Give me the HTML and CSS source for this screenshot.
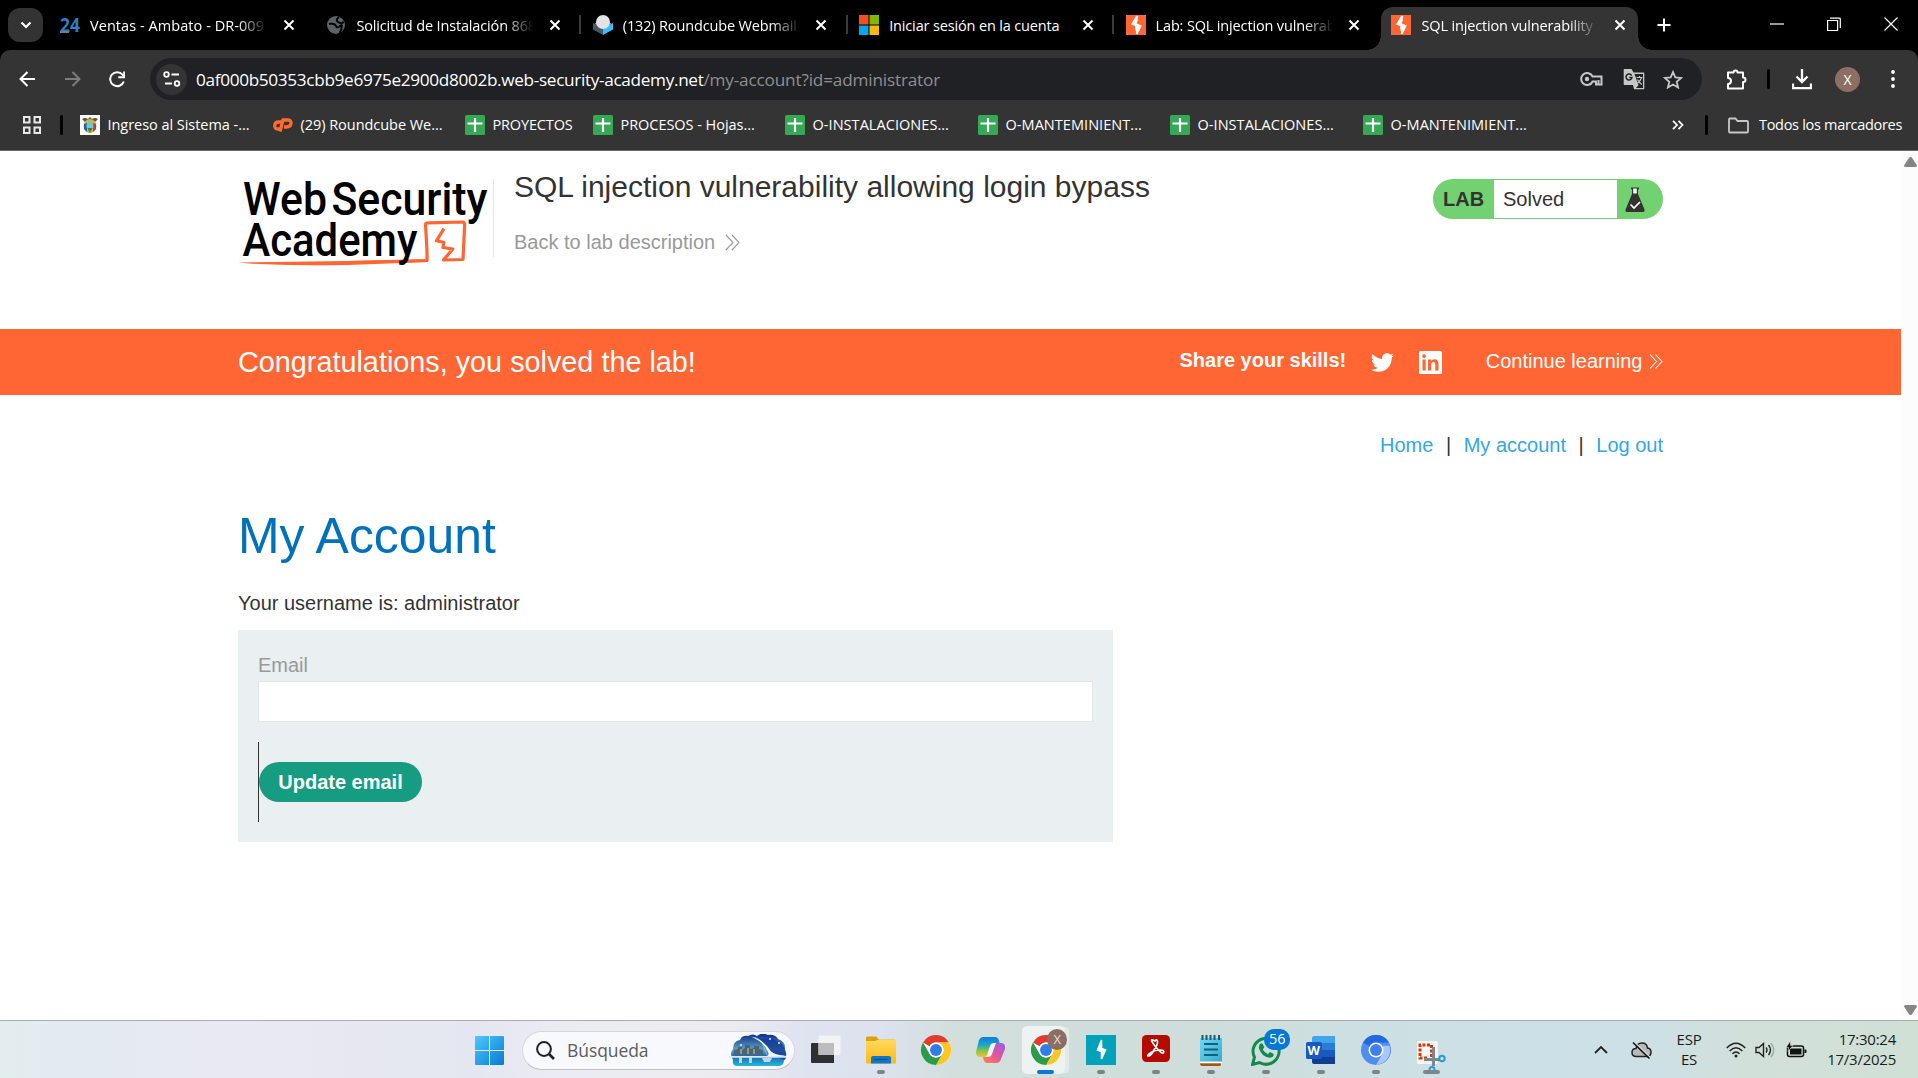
FILE: index.html
```html
<!DOCTYPE html>
<html lang="es">
<head>
<meta charset="utf-8">
<title>SQL injection vulnerability allowing login bypass</title>
<link rel="stylesheet" href="styles.css">
</head>
<body>
<svg class="defs" width="0" height="0" aria-hidden="true">
  <defs>
    <linearGradient id="win" x1="0" y1="0" x2="1" y2="1"><stop offset="0" stop-color="#4cc9fb"/><stop offset="1" stop-color="#0a78d4"/></linearGradient>
    <linearGradient id="fold" x1="0" y1="0" x2="0" y2="1"><stop offset="0" stop-color="#ffda61"/><stop offset="1" stop-color="#fcb914"/></linearGradient>
    <linearGradient id="sky" x1="0" y1="0" x2="0" y2="1"><stop offset="0" stop-color="#0b2a8a"/><stop offset=".5" stop-color="#5fa5c4"/><stop offset=".7" stop-color="#1668b8"/><stop offset="1" stop-color="#25b9d6"/></linearGradient>
    <linearGradient id="copA" x1="0" y1="0" x2="0" y2="1"><stop offset="0" stop-color="#0d7be0"/><stop offset=".4" stop-color="#1aa8c9"/><stop offset=".7" stop-color="#8fc63f"/><stop offset="1" stop-color="#f5c22b"/></linearGradient>
    <linearGradient id="copB" x1="1" y1="0" x2="0" y2="1"><stop offset="0" stop-color="#9a5cf0"/><stop offset=".5" stop-color="#e254a0"/><stop offset="1" stop-color="#fb8a3c"/></linearGradient>
    <linearGradient id="note" x1="0" y1="0" x2="1" y2="1"><stop offset="0" stop-color="#6fdcf2"/><stop offset="1" stop-color="#36a8cc"/></linearGradient>
    <symbol id="x" viewBox="0 0 12 12"><path d="M1.500 1.500l9 9M10.500 1.500l-9 9" stroke="#fff" stroke-width="2" fill="none"/></symbol>
    <symbol id="burp" viewBox="0 0 20 20"><rect width="20" height="20" fill="#f63"/><path d="M11.500 1L8 8.500l6.500 2.500L10.500 19" fill="none" stroke="#fff" stroke-width="2"/><path d="M10 1L5 9.500l4.500 1.500L12 5zM9.500 10l-.5 3 1.500 5.500 4.500-8z" fill="#fff"/></symbol>
    <symbol id="sheet" viewBox="0 0 20 20"><rect width="20" height="20" rx="1.500" fill="#34a853"/><path d="M10 3v14M2.500 8.500h15" stroke="#fff" stroke-width="2.200"/></symbol>
    <symbol id="chrome" viewBox="0 0 48 48"><circle cx="24" cy="24" r="24" fill="#fff"/><path d="M3.200 12A24 24 0 0 1 44.800 12H24a12 12 0 0 0-10.400 6z" fill="#e33b2e"/><path d="M44.800 12A24 24 0 0 1 24 48l10.400-18A12 12 0 0 0 34.400 18L24 12z" fill="#fcc624"/><path d="M24 48A24 24 0 0 1 3.200 12l10.400 18A12 12 0 0 0 34.400 30z" fill="#2a9b48"/><circle cx="24" cy="24" r="12" fill="#fff"/><circle cx="24" cy="24" r="9.500" fill="#2f7de9"/></symbol>
    <symbol id="chev2" viewBox="0 0 15 17"><path d="M1 1l7 7.500L1 16M7 1l7 7.500L7 16" fill="none" stroke="currentColor" stroke-width="1.100"/></symbol>
  </defs>
</svg>

<header class="browser">
  <div class="tabs">
    <div class="tabsearch"><svg width="12" height="8" viewBox="0 0 12 8"><path d="M1.500 1.500L6 6l4.500-4.500" fill="none" stroke="#fff" stroke-width="2.200"/></svg></div>
    <div class="tab">
      <svg class="fav" viewBox="0 0 20 20"><text x="0" y="16.500" class="b24" textLength="20" lengthAdjust="spacingAndGlyphs">24</text><path d="M0 17h9" stroke="#6a7f93" stroke-width="2"/></svg>
      <span class="tt t1">Ventas - Ambato - DR-009</span><svg class="cl"><use href="#x"/></svg>
    </div>
    <div class="tab">
      <svg class="fav" viewBox="0 0 20 20"><circle cx="10" cy="10" r="9" fill="#5f6368"/><path d="M3 9q6-1 7 2t4 0 1 4-4 4" fill="none" stroke="#000" stroke-width="2"/><path d="M13 2q-4 3-1 5t6 0" fill="none" stroke="#000" stroke-width="2"/></svg>
      <span class="tt">Solicitud de Instalación 868</span><svg class="cl"><use href="#x"/></svg><i class="sep"></i>
    </div>
    <div class="tab">
      <svg class="fav" viewBox="0 0 20 20"><path d="M0 8l10 5v7L0 14.500z" fill="#455a64"/><path d="M20 8l-10 5v7l10-5.500z" fill="#37beff"/><path d="M1.500 8.500L10 4l8.500 4.500L10 13.500z" fill="#89a"/><circle cx="10" cy="7" r="7" fill="#e4e4e4"/></svg>
      <span class="tt">(132) Roundcube Webmail</span><svg class="cl"><use href="#x"/></svg><i class="sep"></i>
    </div>
    <div class="tab">
      <svg class="fav" viewBox="0 0 20 20"><path fill="#f25022" d="M0 0h9.500v9.500H0z"/><path fill="#7fba00" d="M10.500 0H20v9.500h-9.500z"/><path fill="#00a4ef" d="M0 10.500h9.500V20H0z"/><path fill="#ffb900" d="M10.500 10.500H20V20h-9.500z"/></svg>
      <span class="tt t4">Iniciar sesión en la cuenta</span><svg class="cl"><use href="#x"/></svg><i class="sep"></i>
    </div>
    <div class="tab">
      <svg class="fav"><use href="#burp"/></svg>
      <span class="tt">Lab: SQL injection vulnerability</span><svg class="cl"><use href="#x"/></svg>
    </div>
    <div class="tab active">
      <svg class="fav"><use href="#burp"/></svg>
      <span class="tt">SQL injection vulnerability allowing</span><svg class="cl"><use href="#x"/></svg>
    </div>
    <svg class="plus" width="14" height="14" viewBox="0 0 14 14"><path d="M7 .5v13M.5 7h13" stroke="#fff" stroke-width="2"/></svg>
    <div class="winbtns">
      <svg width="14" height="14"><path d="M0 7h14" stroke="#fff" stroke-width="1.200"/></svg>
      <svg width="14" height="14"><path d="M.6 3.500h10v10h-10zM3 1.200h9.500q.8 0 .8.800V11" fill="none" stroke="#fff" stroke-width="1.200"/></svg>
      <svg width="14" height="14"><path d="M.5.500l13 13M13.500.500l-13 13" stroke="#fff" stroke-width="1.200"/></svg>
    </div>
  </div>
  <div class="toolbar">
    <svg class="back" width="17" height="16" viewBox="0 0 17 16"><path d="M16 8H2M8.500 1L1.500 8l7 7" fill="none" stroke="#fff" stroke-width="2"/></svg>
    <svg class="fwd" width="17" height="16" viewBox="0 0 17 16"><path d="M1 8h14M8.500 1l7 7-7 7" fill="none" stroke="#7c7c7c" stroke-width="2"/></svg>
    <svg class="reload" width="17" height="17" viewBox="0 0 17 17"><path d="M14.800 10.500A7 7 0 1 1 13.600 3.700L15.200 5.600" fill="none" stroke="#fff" stroke-width="2"/><path d="M16 .5v6.700H9.300V5.300h4.900V.5z" fill="#fff"/></svg>
    <div class="omni">
      <div class="site"><svg width="18" height="16" viewBox="0 0 18 16" fill="none" stroke="#fff" stroke-width="1.800"><circle cx="3.500" cy="3.500" r="2.300"/><path d="M8.500 3.500H16M2 12.500h7"/><circle cx="14" cy="12.500" r="2.300"/></svg></div>
      <span class="url">0af000b50353cbb9e6975e2900d8002b.web-security-academy.net</span><span class="path">/my-account?id=administrator</span>
      <div class="omni-icons">
        <svg width="24" height="14" viewBox="0 0 24 14" fill="none" stroke="#c7c7c7" stroke-width="2"><path d="M12.600 4.500A6 6 0 1 0 12.600 9.500H16V12.500h5.500V4.500z"/><circle cx="7" cy="7" r="2.200" fill="#c7c7c7" stroke="none"/><path d="M18.500 8v4"/></svg>
        <svg width="22" height="22" viewBox="0 0 22 22"><path d="M1.500 1h7l2 3.500H20.500q.8 0 .8.800V20.500q0 .7-.8.700H11L10 17H1.500q-.8 0-.8-.8V1.800q0-.8.8-.8z" fill="#c7c7c7"/><path d="M11.500 6H20v14h-7l2.500-2.800z" fill="#202124"/><path d="M13.500 9.500h6M16.500 8v1.500M18.500 9.500q-1 4-4 5.500M14.500 11.500q1.500 3 4.500 5" stroke="#c7c7c7" stroke-width="1.100" fill="none"/><path d="M8.600 7.500A3 3 0 1 0 9 9.500H6.200" fill="none" stroke="#202124" stroke-width="1.500"/></svg>
        <svg width="20" height="19" viewBox="0 0 20 19"><path d="M10 2l2.300 5.400 5.900.5-4.500 3.900 1.400 5.700-5.100-3-5.100 3 1.400-5.700L1.800 7.900l5.900-.5z" fill="none" stroke="#c7c7c7" stroke-width="1.800"/></svg>
      </div>
    </div>
    <div class="actions">
      <svg class="a1" width="22" height="21" viewBox="0 0 22 21"><path d="M2 3.500h5.500q0-2 2-2t2 2H17V8.500q2.500 0 2.500 2.300T17 13v6.500H2V15q3 0 3-3t-3-3z" fill="none" stroke="#fff" stroke-width="2" stroke-linejoin="round"/></svg>
      <i class="vbar"></i>
      <svg class="a2" width="20" height="21" viewBox="0 0 20 21"><path d="M10 0v12M4.500 7.500L10 13l5.500-5.500M1 14.500v4.700h18v-4.700" fill="none" stroke="#fff" stroke-width="2.300"/></svg>
      <span class="avatar">X</span>
      <svg class="a3" width="4" height="18" fill="#fff"><circle cx="2" cy="2" r="1.900"/><circle cx="2" cy="9" r="1.900"/><circle cx="2" cy="16" r="1.900"/></svg>
    </div>
  </div>
  <div class="marks">
    <svg class="apps" width="18" height="18" fill="none" stroke="#e8e8e8" stroke-width="2"><path d="M1 1h5.500v5.500H1zM11.500 1H17v5.500h-5.500zM1 11.500h5.500V17H1zM11.500 11.500H17V17h-5.500z"/></svg>
    <i class="vbar"></i>
    <div class="marklist">
      <a><svg class="fav" viewBox="0 0 20 20"><rect width="20" height="20" fill="#fff"/><path d="M2 4q3-2 6 0l2-2 2 2q3-2 6 0l-3 3H5z" fill="#555"/><ellipse cx="10" cy="11" rx="6.500" ry="7" fill="#d6b23c"/><path d="M4 9v5l3 3V8z" fill="#2a5fa8"/><path d="M16 9v5l-3 3V8z" fill="#c33"/><ellipse cx="10" cy="11" rx="3.500" ry="4.500" fill="#6fc7cf"/><path d="M7.500 13h5l-2.500 5z" fill="#4a7a3a"/></svg><span>Ingreso al Sistema -...</span></a>
      <a><svg class="fav" viewBox="0 0 20 20" fill="none" stroke="#ff6c2c" stroke-width="3.300"><path d="M8.500 7H5.500Q2 7 1.700 10.500T5 14h1.500M7 16.500L10 5h4.500q4 0 3.500 3.500T13.500 12h-2.500"/></svg><span>(29) Roundcube We...</span></a>
      <a><svg class="fav"><use href="#sheet"/></svg><span class="m3">PROYECTOS</span></a>
      <a><svg class="fav"><use href="#sheet"/></svg><span>PROCESOS - Hojas...</span></a>
      <a><svg class="fav"><use href="#sheet"/></svg><span class="m5">O-INSTALACIONES...</span></a>
      <a><svg class="fav"><use href="#sheet"/></svg><span class="m5">O-MANTEMINIENT...</span></a>
      <a><svg class="fav"><use href="#sheet"/></svg><span class="m5">O-INSTALACIONES...</span></a>
      <a><svg class="fav"><use href="#sheet"/></svg><span class="m5">O-MANTENIMIENT...</span></a>
    </div>
    <div class="allmarks">
      <svg width="12" height="10" viewBox="0 0 12 10"><path d="M1 .8L5 5 1 9.200M6.500.8l4 4.200-4 4.200" fill="none" stroke="#fff" stroke-width="1.800"/></svg>
      <i class="vbar"></i>
      <svg class="folder" width="21" height="17" viewBox="0 0 21 17"><path d="M1 14.500V2.500Q1 1.500 2 1.500h5.500l2 2.500H19q1 0 1 1v9.500q0 1-1 1H2q-1 0-1-1z" fill="none" stroke="#c7c7c7" stroke-width="1.800"/></svg>
      <span class="m7">Todos los marcadores</span>
    </div>
  </div>
</header>

<main class="view">
  <div class="page">
    <div class="wrap labhead">
      <svg class="logo" width="255" height="100" viewBox="0 0 255 100">
        <path d="M110 83.500L189 81.500V72L187.500 45.500q0-1.700 3-1.700L225.500 43l1.200 2L225 80.500l-19.500.5 9.300-11-9.800-1.500.8-5.300-7.300-1.500L206 49.700" fill="none" stroke="#f63" stroke-width="3.200" stroke-linejoin="round"/>
        <path d="M0 83.500q30 3.500 110 2.500l80-3v-2.500L110 82z" fill="#f63"/>
        <g class="logotype"><text x="5" y="35.700" textLength="84" lengthAdjust="spacingAndGlyphs">Web</text><text x="93.500" y="35.700" textLength="156" lengthAdjust="spacingAndGlyphs">Security</text><text x="4.500" y="77" textLength="175" lengthAdjust="spacingAndGlyphs">Academy</text></g>
      </svg>
      <div class="titles">
        <h2>SQL injection vulnerability allowing login bypass</h2>
        <a class="backlink"><span>Back to lab description</span><svg width="15" height="17"><use href="#chev2"/></svg></a>
      </div>
      <div class="labstatus"><b>LAB</b><span>Solved</span>
        <svg width="20" height="25" viewBox="0 0 20 25"><path d="M6 .5h8v1.800h-1V7L19.500 22.500Q20 25 18 25H2Q0 25 .5 22.500L7 7V2.300H6z" fill="#333332"/><path d="M8.200 1.500h3.600v5H8.200z" fill="#fff"/><path d="M5.500 17.500l3.500 3.500 6-6" fill="none" stroke="#fff" stroke-width="1.700"/></svg>
      </div>
    </div>
    <div class="banner"><div class="wrap">
      <h4>Congratulations, you solved the lab!</h4>
      <div class="share">
        <b>Share your skills!</b>
        <svg width="23" height="21" viewBox="0 2 24 20"><path fill="#fff" d="M23.950 4.570a10 10 0 0 1-2.820.77 4.960 4.960 0 0 0 2.160-2.720 9.900 9.900 0 0 1-3.120 1.180 4.920 4.920 0 0 0-8.380 4.480A13.900 13.900 0 0 1 1.640 3.160a4.920 4.920 0 0 0 1.520 6.570 4.900 4.900 0 0 1-2.230-.61v.06a4.920 4.920 0 0 0 3.950 4.830 5 5 0 0 1-2.210.08 4.940 4.940 0 0 0 4.600 3.420A9.870 9.870 0 0 1 0 19.540a14 14 0 0 0 7.550 2.210c9.050 0 14-7.500 14-13.980 0-.21 0-.42-.02-.63a9.900 9.900 0 0 0 2.420-2.570z"/></svg>
        <svg width="23" height="23" viewBox="0 0 23 23"><rect width="23" height="23" rx="1.500" fill="#fff"/><g fill="#f63"><rect x="3.500" y="8.500" width="3.200" height="11"/><circle cx="5.100" cy="5.100" r="1.900"/><path d="M9 8.500h3.100v1.600q1-1.900 3.400-1.900 4 0 4 4.800v6.500h-3.200v-5.800q0-2.800-1.900-2.800-2.200 0-2.200 2.900v5.700H9z"/></g></svg>
        <a><span>Continue learning</span><svg width="14" height="17"><use href="#chev2"/></svg></a>
      </div>
    </div></div>
    <div class="wrap account">
      <nav><a>Home</a><i>|</i><a>My account</a><i>|</i><a>Log out</a></nav>
      <h1>My Account</h1>
      <p>Your username is: administrator</p>
      <form>
        <label for="email">Email</label>
        <input id="email" type="email">
        <div class="btnrow"><button type="button">Update email</button></div>
      </form>
    </div>
  </div>
  <div class="scroll">
    <svg width="13" height="10"><path d="M6.500 0Q7.500 0 8.200 1L13 8.500Q13 10 11.500 10h-10Q0 10 0 8.500L4.800 1Q5.500 0 6.500 0z" fill="#858585"/></svg>
    <svg width="13" height="10"><path d="M6.500 10Q7.500 10 8.200 9L13 1.500Q13 0 11.500 0h-10Q0 0 0 1.500L4.800 9Q5.500 10 6.500 10z" fill="#858585"/></svg>
  </div>
</main>

<footer class="taskbar">
  <svg class="start" width="29" height="29" viewBox="0 0 29 29"><path d="M1 0h13v14H0V1q0-1 1-1zM15 0h13q1 0 1 1v13H15zM0 15h14v14H1q-1 0-1-1zM15 15h14v13q0 1-1 1H15z" fill="url(#win)"/></svg>
  <div class="search">
    <svg width="19" height="19" viewBox="0 0 19 19"><circle cx="8" cy="8" r="6.900" fill="none" stroke="#222" stroke-width="2"/><path d="M13 13l5 5" stroke="#222" stroke-width="2.600"/></svg>
    <span>Búsqueda</span>
    <svg width="58" height="33" viewBox="0 0 58 33"><path d="M4 26q-4-7 0-11 0-8 7-9 2-5 8-4 5-3 9 0 5-4 11-1 7-1 10 4 8 3 7 10 3 7-1 11 0 6-6 6H8q-5 0-4-6z" fill="url(#sky)"/><path d="M30 6q10-4 18 1 8 3 8 10 2 5 0 9l-9-3z" fill="#123a96" opacity=".8"/><path d="M5 21v-5l4-1v-2h4v3l3-2v-3h5v4l4-1v-2h5v3l4 1v5z" fill="#4b6473"/><path d="M12 20v-5M19 20v-6M25 20v-5" stroke="#d9cf98" stroke-width="1"/><path d="M26 3.500q10 4 15 16M33 8l5 13" fill="none" stroke="#9fc0ec" stroke-width=".8"/><path d="M22 2.500q13 3 20 15 5 4 15 4l-9 1.500H35q6-1 4-5-4-10-17-15.500z" fill="#f4f7ff"/><path d="M0 22h57v1.800H0z" fill="#dce7f7"/><path d="M10 23h3v6h-3zM20 23h3v6h-3zM33 24h10l-2 4h-6z" fill="#c7d3e6"/><circle cx="12" cy="11" r=".9" fill="#fff"/><circle cx="41" cy="5" r=".9" fill="#fff"/><circle cx="50" cy="9" r=".9" fill="#fff"/></svg>
  </div>
  <div class="apps-row">
    <div class="cell"><svg width="30" height="30" viewBox="0 0 30 30"><path d="M0 9q0-1 1-1h22v20H1q-1 0-1-1z" fill="#303030"/><rect x="7.500" y=".5" width="22" height="19.500" rx="1" fill="#f4f4f4" opacity=".97"/><path d="M7.500 8H23v12H7.500z" fill="#bdbdbd"/></svg></div>
    <div class="cell run"><svg width="30" height="28" viewBox="0 0 30 28"><path d="M0 2Q0 .5 1.500.5H10l3 3h16v8H0z" fill="#dea00c"/><path d="M0 5h9l4-1.500h16q1 0 1 1V27q0 .5-1 .5H1q-1 0-1-1z" fill="url(#fold)"/><path d="M5 27.500V22q0-2 2-2h16q2 0 2 2v5.500z" fill="#1175c8"/><path d="M8.500 23.500h13" stroke="#084f92" stroke-width="1.200"/></svg></div>
    <div class="cell"><svg width="30" height="30"><use href="#chrome"/></svg></div>
    <div class="cell"><svg width="29" height="28" viewBox="0 0 29 28"><path d="M7 1h12q3 0 4 4l1 3h-6q-3 0-4 4l-2 7q-1 2-4 2H3Q0 20 0 16L3 4Q4.500 1 7 1z" fill="url(#copA)"/><path d="M20 27H11q-3 0-4-6h4q2 0 3-3l3-7q1-4 5-4h4q4 1 3 6l-4 10q-1 4-5 4z" fill="url(#copB)"/><path d="M11 19l3-9q1-3 4-3h2l-4 11q-1 3-4 3h-2z" fill="#f7f2f7"/></svg></div>
    <div class="cell current"><svg width="30" height="30"><use href="#chrome"/></svg><b class="who">X</b></div>
    <div class="cell run"><svg width="30" height="30" viewBox="0 0 30 30"><path d="M0 0h30v30H0z" fill="#02a3ba"/><path d="M15.500 5v8.500l4 1.500-4 9v-7.500l-4-1.500z" fill="#fff" stroke="#fff" stroke-width="1.600"/></svg></div>
    <div class="cell run"><svg class="up" width="28" height="27" viewBox="0 0 28 27"><rect width="28" height="27" rx="4.500" fill="#b30b00"/><path d="M13 6q2-2.500 2.500.5T12 15q-3 6-5.500 6T9 17.500q4-2.500 9-2.500t3.500 2.500T13 11 13 6z" fill="none" stroke="#fff" stroke-width="1.700"/></svg></div>
    <div class="cell run"><svg width="24" height="31" viewBox="0 0 24 31"><path d="M1 28h21v1.500q0 1.500-2 1.500H3q-2 0-2-3z" fill="#a8540c"/><path d="M1 3h22v24H1z" fill="url(#note)"/><path d="M1 26.500h22v1.800H1z" fill="#fff"/><path d="M3.500 0v5M7.500 0v5M11.500 0v5M15.500 0v5M20 0v5" stroke="#1c5773" stroke-width="2"/><path d="M5 9h14M5 14.500h14M5 20h14" stroke="#125f80" stroke-width="1.800"/></svg></div>
    <div class="cell run"><svg width="30" height="31" viewBox="0 0 30 31"><path d="M1.500 29.500l2-7.300A13 13 0 1 1 8.500 27.500z" fill="none" stroke="#14894e" stroke-width="3"/><path d="M9.500 8.500h2l1.800 4-1.500 2q2 3.500 5.200 4.700l1.800-2.200 4 2q0 3.500-4 3.700Q11 22.500 8 13.500q-.5-3.500 1.500-5z" fill="#14894e"/></svg><b class="count">56</b></div>
    <div class="cell run"><svg width="29" height="28" viewBox="0 0 29 28"><path d="M6 2Q6 0 8 0h21v7H6z" fill="#41a5ee"/><path d="M6 7h23v7H6z" fill="#2b7cd3"/><path d="M6 14h23v7H6z" fill="#185abd"/><path d="M6 21h23v7H8q-2 0-2-2z" fill="#103f91"/><rect y="6" width="16" height="17" rx="1.500" fill="#185abd"/><text x="1.500" y="19" class="wl" textLength="12.500" lengthAdjust="spacingAndGlyphs">W</text></svg></div>
    <div class="cell run"><svg width="30" height="30" viewBox="0 0 48 48"><circle cx="24" cy="24" r="24" fill="#4f8df5"/><path d="M3.200 12A24 24 0 0 1 44.800 12H24a12 12 0 0 0-10.400 6z" fill="#1f6ae0"/><path d="M45.500 17A24 24 0 0 1 24 48l10.400-18V17z" fill="#a9c7fb"/><circle cx="24" cy="24" r="12" fill="#fff"/><circle cx="24" cy="24" r="9.500" fill="#3f80ee"/></svg></div>
    <div class="cell run wide"><svg class="snip" width="30" height="32" viewBox="0 0 30 32"><rect x="1" width="21" height="23" rx="1.500" fill="#f5f5f5"/><path d="M15.500 16V4H4v13h8" fill="none" stroke="#d83b01" stroke-width="3" stroke-dasharray="3 1.500"/><path d="M17.500 6v19M8 18.500h15" stroke="#7b8791" stroke-width="3"/><circle cx="26" cy="17.500" r="2.700" fill="none" stroke="#2a9bd6" stroke-width="2"/><circle cx="16" cy="28.500" r="2.500" fill="none" stroke="#2a9bd6" stroke-width="2"/></svg></div>
  </div>
  <div class="tray">
    <svg class="y1" width="14" height="9" viewBox="0 0 14 9"><path d="M1 8l6-6 6 6" fill="none" stroke="#222" stroke-width="1.800"/></svg>
    <svg class="y2" width="21" height="18" viewBox="0 0 21 18"><path d="M5.500 15.500q-4.500 0-4.500-4t4-4q1-5.500 6-5.500t5.500 5q3.500.5 3.500 4.200t-3.800 4.300z" fill="#b9b9b9" stroke="#222" stroke-width="1.500"/><path d="M3.500 1.300l15.500 15" stroke="#d4e2df" stroke-width="1.500"/><path d="M2 1.500l16.500 16" stroke="#111" stroke-width="1.600"/></svg>
    <div class="lang">ESP<br>ES</div>
    <svg class="y3" width="20" height="16" viewBox="0 0 20 16" fill="none" stroke="#222" stroke-width="1.500"><path d="M.8 6Q10-3.500 19.200 6M3.600 9Q10 2.300 16.400 9M6.400 11.800q3.600-3.600 7.200 0"/><circle cx="10" cy="14" r="1.500" fill="#222" stroke="none"/></svg>
    <svg class="y4" width="20" height="16" viewBox="0 0 20 16" fill="none" stroke="#222" stroke-width="1.400"><path d="M1 5.500h3L8.500 1.500v13L4 10.500H1zM11 5.500q2 2.500 0 5M13.500 3q4 5 0 10"/><path d="M16 1q5.500 7 0 14" stroke="#9daaa6"/></svg>
    <svg class="y5" width="21" height="17" viewBox="0 0 21 17"><rect x="1.500" y="5" width="16" height="10.500" rx="2" fill="none" stroke="#111" stroke-width="1.500"/><path d="M4 7.500h11.500v6H4zM18.500 8.500h1q1 0 1 1v1.500q0 1-1 1h-1z" fill="#111"/><path d="M4.500 0L0 6.500h2.500L2 10.500l5-6H4.500z" fill="#111" stroke="#d3e0d8" stroke-width=".6"/></svg>
    <div class="clock"><span>17:30:24</span><br><span>17/3/2025</span></div>
  </div>
</footer>
</body>
</html>
```
FILE: styles.css
```css
* { box-sizing: border-box; }
body { margin: 0; width: 1918px; height: 1078px; overflow: hidden; display: flex; flex-direction: column; background: #fff; font-family: "Liberation Sans", Arial, sans-serif; }
svg { display: block; flex: none; }
.defs { position: absolute; }
i { font-style: normal; flex: none; }

/* browser chrome */
.browser { height: 151px; background: #000; color: #fff; font: 14.5px "Open Sans", "Noto Sans", sans-serif; border-bottom: 1px solid #6b6969; flex: none; }
.tabs { height: 50px; display: flex; padding-left: 8px; }
.tabsearch { width: 35px; height: 34px; margin: 8px 6.500px 0 0; border-radius: 12px; background: #333; display: flex; align-items: center; justify-content: center; }
.tab { width: 266.400px; flex: none; height: 50px; padding: 0 12px 0 10.500px; display: flex; align-items: center; position: relative; }
.fav { width: 20px; height: 20px; flex: none; overflow: visible; }
.b24 { font: bold 20px "Open Sans", sans-serif; fill: #2b7fc3; }
.tt { width: 176px; margin: 1px 16.500px 0 10px; overflow: hidden; white-space: nowrap; letter-spacing: -.15px; flex: none; -webkit-mask-image: linear-gradient(90deg, #000 84%, transparent 101%); mask-image: linear-gradient(90deg, #000 84%, transparent 101%); }
.t1 { letter-spacing: .06px; }
.t4 { -webkit-mask-image: none; mask-image: none; }
.cl { width: 12px; height: 12px; }
.sep { position: absolute; right: 1px; top: 15px; width: 2px; height: 19px; background: #3b3b3b; }
.active { height: 43px; margin-top: 7px; padding-bottom: 7px; width: 257px; background: #343434; border-radius: 12px 12px 0 0; padding-left: 10px; }
.active::before, .active::after { content: ""; position: absolute; bottom: 0; width: 14px; height: 14px; left: -14px; background: radial-gradient(circle at 0 0, transparent 13.500px, #343434 14px); }
.active::after { left: auto; right: -14px; background: radial-gradient(circle at 100% 0, transparent 13.500px, #343434 14px); }
.plus { margin: 18px 0 0 18.500px; }
.winbtns { margin: 17px 20px 0 auto; display: flex; gap: 43px; }
.toolbar { height: 58px; background: #343434; display: flex; align-items: center; border-radius: 10px 10px 0 0; padding-left: 19px; }
.fwd { margin-left: 28px; }
.reload { margin-left: 28px; }
.omni { margin-left: 24px; width: 1552px; height: 42px; background: #202124; border-radius: 21px; display: flex; align-items: center; padding: 0 19px 0 6px; font-size: 17.200px; white-space: nowrap; }
.site { width: 31px; height: 31px; border-radius: 50%; background: #343434; display: flex; align-items: center; justify-content: center; margin-right: 9px; }
.url { letter-spacing: -.33px; }
.path { color: #8e8f92; letter-spacing: -.18px; }
.omni-icons { margin-left: auto; display: flex; align-items: center; gap: 18.500px; }
.actions { flex: 1; display: flex; align-items: center; }
.a1 { margin-left: 24px; }
.vbar { width: 3px; height: 20px; border-radius: 2px; background: #000; }
.actions .vbar { margin: 0 22px 0 19px; }
.avatar { width: 25px; height: 25px; border-radius: 50%; background: #8d6e63; margin: 0 31px 0 23px; text-align: center; line-height: 25px; font-size: 14px; }
.marks { height: 42px; background: #343434; display: flex; align-items: center; padding: 0 16px 8px 23px; letter-spacing: -.04px; white-space: nowrap; }
.marks > .vbar { margin-left: 19px; }
.marks span { margin-top: -2px; }
.marklist { display: grid; grid-template-columns: 193px 192px 128px 192px 193px 192px 193px 190px; margin-left: 17px; }
.marklist a { display: flex; align-items: center; gap: 7.500px; }
.m3 { letter-spacing: -.15px; }
.m5 { letter-spacing: .05px; }
.m7 { letter-spacing: -.3px; }
.allmarks { margin-left: auto; display: flex; align-items: center; }
.allmarks .vbar { margin: 0 20px 0 21px; }
.folder { margin-right: 10px; }

/* lab page */
.view { flex: 1; display: flex; min-height: 0; }
.page { width: 1901px; color: #333332; font-size: 20px; }
.wrap { width: 1425px; margin-left: 238px; display: flex; }
.labhead { height: 178px; padding-top: 28px; align-items: flex-start; }
.logotype { font: 500 47px Roboto, sans-serif; }
.titles { border-left: 1px solid #e5e5e5; height: 78px; padding-left: 20px; }
.titles h2 { margin: -9px 0 0; font-size: 30px; font-weight: 400; line-height: 34px; white-space: nowrap; }
.backlink { color: #999; display: flex; align-items: center; gap: 10px; margin-top: 26px; line-height: 24px; }
.labstatus { margin-left: auto; width: 230px; height: 40px; background: #72d272; border-radius: 20px; display: flex; align-items: center; }
.labstatus b { width: 61px; padding-left: 10px; }
.labstatus span { width: 123px; height: 38px; line-height: 39px; padding-left: 9px; background: #fff; margin-right: 8px; }
.banner { height: 66px; background: #f63; color: #fff; }
.banner .wrap { height: 66px; align-items: center; justify-content: space-between; }
.banner h4 { margin: 1px 0 0; font-size: 28.800px; font-weight: 400; white-space: nowrap; }
.share { display: flex; align-items: center; }
.share b { margin: -4px 25px 0 0; }
.share svg + svg { margin-left: 25px; }
.share a { display: flex; gap: 6.500px; align-items: center; margin: -2px 0 0 43.500px; }
.account { display: block; padding-top: 39px; }
nav { display: flex; justify-content: flex-end; line-height: 22px; color: #34a7e5; }
nav i { width: 30.300px; text-align: center; color: #333; }
h1 { font-size: 49.900px; font-weight: 400; color: #0071bc; margin: 51px 0 0; line-height: 58px; }
p { margin: 26px 0 15px; line-height: 24px; }
form { width: 875px; height: 212px; background: #eaeff2; padding: 23px 20px 20px; }
label { display: block; color: #999; line-height: 24px; margin-bottom: 4px; }
input { display: block; width: 835px; height: 41px; border: 1px solid #e2e4e6; background: #fff; padding: 0; }
.btnrow { margin-top: 20px; height: 80px; padding: 20px 0; border-left: 1px solid #333; }
button { display: block; width: 163px; height: 40px; border: 0; border-radius: 20px; background: #169c80; color: #fff; font: bold 20px "Liberation Sans", Arial, sans-serif; padding: 0; white-space: nowrap; }
.scroll { width: 17px; background: #fcfcfc; display: flex; flex-direction: column; justify-content: space-between; padding: 6px 0 5px 3px; }

/* taskbar */
.taskbar { height: 58px; flex: none; border-top: 1px solid #a9adb2; display: flex; align-items: center; padding-left: 475px; font-family: "Open Sans", "Noto Sans", sans-serif; background: linear-gradient(90deg, #e2edee 0, #e3eaf2 4%, #e9e9f2 12%, #e4e7f1 25%, #ebebf3 29%, #ececf0 38%, #dfe3f0 42%, #dce2ee 46%, #d2dfdc 50%, #cfdedb 63%, #cddfe0 70%, #cce0e8 80%, #cde0e6 86%, #d2e0da 91%, #d1e0d5 100%); }
.start { margin-top: 2px; }
.search { width: 273px; height: 39px; margin: 1px 0 0 18px; border-radius: 20px; background: #f8f9fc; border: 1px solid #d5d7de; border-bottom-color: #bfc1c7; display: flex; align-items: center; padding: 0 7px 0 13px; font-size: 17.500px; letter-spacing: -.08px; color: #5c5c5c; }
.search span { margin: 0 auto 0 12px; }
.apps-row { display: flex; margin-left: 3px; }
.cell { width: 55.050px; height: 56px; display: flex; align-items: center; justify-content: center; position: relative; padding-top: 1px; }
.run::after, .current::after { content: ""; position: absolute; bottom: 4px; width: 8px; height: 4px; border-radius: 2px; background: #7d8486; }
.wide::after { width: 17px; }
.current::before { content: ""; position: absolute; left: 4px; top: 4px; width: 43px; height: 48px; border-radius: 5px; background: #edf3f3; box-shadow: 5px 0 0 -1px #e0eae9; }
.current svg { position: relative; }
.current::after { width: 17px; background: #0a78d4; left: 19px; }
.who, .count { position: absolute; font-weight: 400; text-align: center; }
.who { left: 29px; top: 7px; width: 20px; height: 21px; border-radius: 50%; background: #8d6e63; color: #e6dcd9; font-size: 13px; line-height: 20px; }
.count { left: 26px; top: 7px; width: 26px; height: 21px; border-radius: 10px; background: #0078d4; color: #fff; font-size: 14.500px; line-height: 20px; }
.up { margin-top: -3px; }
.snip { margin-top: 13px; }
.wl { font: bold 13px "Open Sans", sans-serif; fill: #fff; }
.tray { margin-left: auto; display: flex; align-items: center; padding-right: 22px; font-size: 15px; line-height: 20px; color: #1c1c1c; letter-spacing: -.25px; }
.y2 { margin-left: 23px; }
.lang { width: 30px; margin: -2px 0 0 22px; text-align: center; }
.y3 { margin-left: 22px; }
.y4 { margin-left: 9px; }
.y5 { margin-left: 11px; }
.clock { width: 75px; margin: -2px 0 0 14px; text-align: right; white-space: nowrap; }
```
